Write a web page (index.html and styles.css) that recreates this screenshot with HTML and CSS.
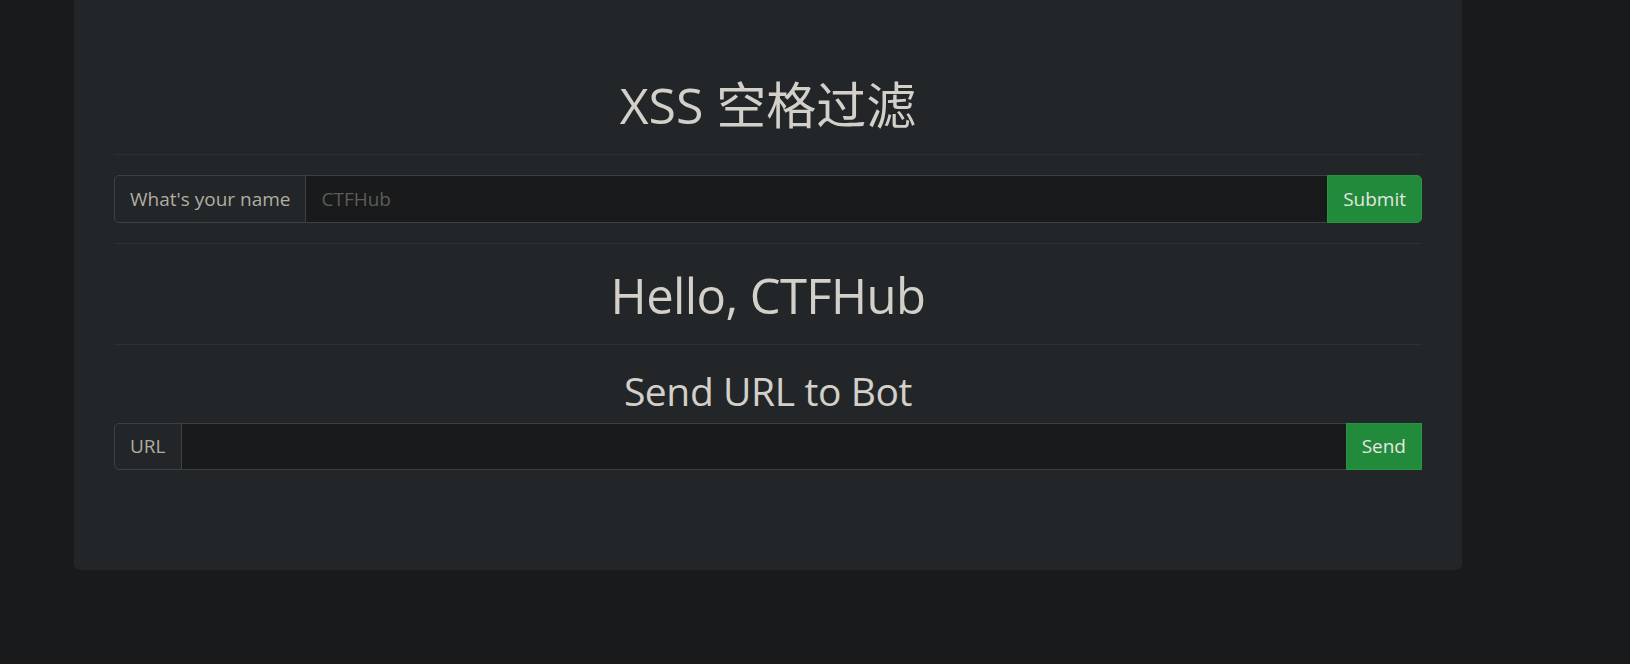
FILE: index.html
```html
<!DOCTYPE html>
<html lang="zh-CN">
<head>
<meta charset="utf-8">
<title>XSS 空格过滤</title>
<link rel="stylesheet" href="styles.css">
</head>
<body>
<div class="jumbotron">
  <h1 class="title">XSS 空格过滤</h1>
  <hr class="rule">
  <form class="input-group">
    <span class="addon addon-first">What's your name</span>
    <input class="field" type="text" name="name" placeholder="CTFHub">
    <button class="btn btn-round" type="button">Submit</button>
  </form>
  <hr class="rule">
  <h1 class="title title-latin">Hello, CTFHub</h1>
  <hr class="rule">
  <h2 class="subtitle">Send URL to Bot</h2>
  <form class="input-group form-last">
    <span class="addon addon-first">URL</span>
    <input class="field" type="text" name="url">
    <button class="btn" type="button">Send</button>
  </form>
</div>
</body>
</html>
```

FILE: styles.css
```css
html, body {
  margin: 0;
  padding: 0;
}
body {
  background: #181a1b;
  color: #d3cfc9;
  font-family: "Open Sans", "Noto Sans", "Noto Sans CJK SC", sans-serif;
  font-size: 19px;
  height: 664px;
  overflow: hidden;
}
.jumbotron {
  width: 1308px;
  margin-left: 74px;
  padding: 74px 40px 80px;
  background: #222628;
  border-radius: 0 0 6px 6px;
}
.title {
  margin: 0 0 10px;
  padding-top: 3px;
  font-size: 50px;
  line-height: 57px;
  font-weight: 400;
  text-align: center;
}
.title-latin {
  font-size: 49px;
  letter-spacing: -0.6px;
}
.subtitle {
  margin: 0 0 10px;
  padding-top: 3px;
  font-size: 39px;
  line-height: 45px;
  font-weight: 400;
  letter-spacing: -0.4px;
  text-align: center;
}
.rule {
  margin: 20px 0;
  border: 0;
  border-top: 1px solid #2d3134;
  height: 0;
}
.input-group {
  display: flex;
  height: 47.5px;
  margin: 0;
}
.form-last {
  margin-bottom: 20px;
}
.addon {
  display: flex;
  align-items: center;
  padding: 0 15px;
  background: #222628;
  color: #b2aca2;
  border: 1px solid #3c4144;
  font-size: 19px;
  white-space: nowrap;
}
.addon-first {
  border-radius: 5px 0 0 5px;
}
.field {
  flex: 1;
  min-width: 0;
  margin: 0;
  padding: 0 15px;
  background: #181a1b;
  color: #b2aca2;
  border: 1px solid #3c4144;
  border-left: 0;
  border-right: 0;
  font-family: inherit;
  font-size: 19px;
  outline: none;
}
.field::placeholder {
  color: #5e5c58;
}
.btn {
  margin: 0;
  padding: 0 15px;
  background: #218a3b;
  color: #e8e6e3;
  border: 1px solid #26973f;
  font-family: inherit;
  font-size: 19px;
  cursor: pointer;
}
.btn-round {
  border-radius: 0 5px 5px 0;
}
```
